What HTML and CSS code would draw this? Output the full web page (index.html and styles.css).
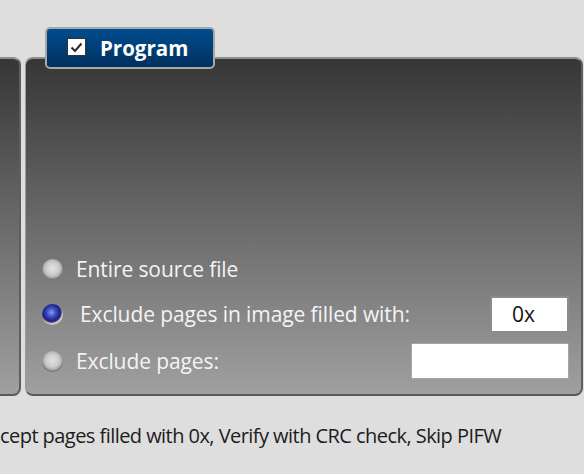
FILE: index.html
```html
<!DOCTYPE html>
<html>
<head>
<meta charset="utf-8">
<link rel="stylesheet" href="styles.css">
</head>
<body>
<div class="stage">
  <div class="panels">
    <div class="panel side"></div>
    <div class="panel main">
      <div class="options">
        <div class="row r1">
          <span class="radio"></span>
          <span class="label">Entire source file</span>
        </div>
        <div class="row r2">
          <span class="radio on"></span>
          <span class="label shifted">Exclude pages in image filled with:</span>
          <span class="field small">0x</span>
        </div>
        <div class="row r3">
          <span class="radio"></span>
          <span class="label">Exclude pages:</span>
          <span class="field wide"></span>
        </div>
      </div>
    </div>
  </div>
  <div class="tab">
    <span class="check">
      <svg width="13" height="11" viewBox="0 0 13 11"><polyline points="1.5,5.5 5,9 11.5,1.5" fill="none" stroke="#2a2a2a" stroke-width="2"/></svg>
    </span>
    <span class="tab-title">Program</span>
  </div>
  <div class="summary">cept pages filled with 0x, Verify with CRC check, Skip PIFW</div>
</div>
</body>
</html>
```
FILE: styles.css
```css
html, body {
  margin: 0;
  padding: 0;
  background: #dedede;
}
.stage {
  position: relative;
  width: 584px;
  height: 474px;
  overflow: hidden;
  font-family: "Open Sans", "Noto Sans", sans-serif;
}
.panels {
  display: flex;
  gap: 4px;
  margin-top: 57px;
  height: 339px;
  margin-left: -20px;
  margin-right: 1px;
}
.panel {
  box-sizing: border-box;
  border-radius: 8px;
  background: linear-gradient(#363636, #a0a0a0);
  border-top: 2px solid #8e8e8e;
  border-left: 1px solid #9a9a9a;
  border-right: 2px solid #5e5e5e;
  border-bottom: 2px solid #5a5a5a;
}
.side {
  width: 41px;
}
.main {
  flex: 1;
  display: flex;
  flex-direction: column;
  justify-content: flex-end;
  padding: 0 12px 15px 16px;
}
.options {
  display: flex;
  flex-direction: column;
}
.row {
  display: flex;
  align-items: center;
}
.r1 { height: 36px; }
.r2 { height: 40px; margin-top: 7px; }
.r3 { height: 36px; margin-top: 9px; }
.radio {
  width: 21px;
  height: 21px;
  border-radius: 50%;
  box-sizing: border-box;
  flex: none;
  background:
    radial-gradient(circle at 50% 45%, #e2e2e2 0, #cdcdcd 40%, #b0b0b0 58%, #7c7c7c 68%, #666 78%, #8c8c8c 100%);
}
.radio.on {
  background:
    radial-gradient(circle at 45% 40%, #8c9ae8 0, #4050c0 25%, #1c1e88 50%, #4a4a7a 58%, #cfcfcf 64%, #b8b8b8 78%, #7a7a7a 100%);
}
.label {
  margin-left: 13px;
  font-size: 21px;
  color: #f4f4f4;
  letter-spacing: -0.1px;
  white-space: nowrap;
}
.label.shifted {
  margin-left: 17px;
}
.field {
  margin-left: auto;
  background: #fff;
  box-sizing: border-box;
  display: flex;
  align-items: center;
  justify-content: center;
  color: #111;
  font-size: 21px;
}
.field.small {
  width: 79px;
  height: 37px;
  border: 2px solid #8c8c8c;
  padding-right: 12px;
}
.field.wide {
  width: 158px;
  height: 36px;
  border: 1px solid #a6a6a6;
}
.tab {
  position: absolute;
  left: 45px;
  top: 27px;
  width: 170px;
  height: 42px;
  box-sizing: border-box;
  border: 2px solid #a8a8a8;
  border-radius: 5px;
  background: linear-gradient(#004d8e, #00305f);
  display: flex;
  align-items: center;
  padding-left: 20px;
}
.check {
  width: 19px;
  height: 18px;
  box-sizing: border-box;
  background: #fff;
  border: 1px solid #333;
  display: flex;
  align-items: center;
  justify-content: center;
  margin-top: -2px;
}
.tab-title {
  margin-left: 14px;
  color: #fff;
  font-weight: bold;
  font-size: 20.5px;
  margin-top: 0;
}
.summary {
  margin-top: 26px;
  font-size: 20px;
  color: #1c1c1c;
  white-space: nowrap;
  letter-spacing: -0.55px;
}
```
